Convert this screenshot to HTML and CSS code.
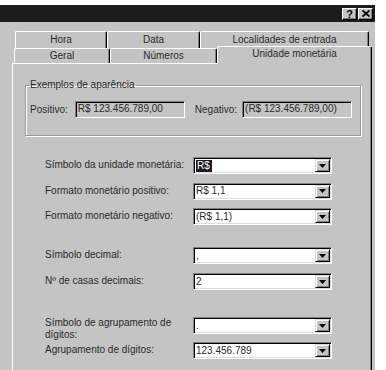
FILE: index.html
```html
<!DOCTYPE html>
<html lang="pt">

<head>
    <meta charset="UTF-8">
    <meta name="viewport" content="width=device-width, initial-scale=1.0">
    <link rel="stylesheet" href="styles.css">
    <title>Configurações regionais</title>
</head>

<body>

    <div class="dialog">
        <div class="titlebar">
            <span class="caption-btn help">?</span>
            <span class="caption-btn close">
                <svg width="8" height="7" viewBox="0 0 8 7">
                    <path d="M0.5 0.5 L7.5 6.5 M7.5 0.5 L0.5 6.5" stroke="#000" stroke-width="1.8" />
                </svg>
            </span>
        </div>

        <div class="tabs">
            <div class="tab-row row-back">
                <div class="tab tab-hora">Hora</div>
                <div class="tab tab-data">Data</div>
                <div class="tab tab-locale">Localidades de entrada</div>
            </div>
            <div class="tab-row row-front">
                <div class="tab tab-geral">Geral</div>
                <div class="tab tab-numeros">Números</div>
                <div class="tab tab-moeda selected">Unidade monetária</div>
            </div>
        </div>

        <div class="panel">
            <fieldset class="examples">
                <legend>Exemplos de aparência</legend>
                <div class="sample-row">
                    <span class="sample-label">Positivo:</span>
                    <span class="sample-box">R$ 123.456.789,00</span>
                    <span class="sample-label negative">Negativo:</span>
                    <span class="sample-box">(R$ 123.456.789,00)</span>
                </div>
            </fieldset>

            <div class="field-group group-currency">
                <div class="field">
                    <label>Símbolo da unidade monetária:</label>
                    <div class="combo">
                        <span class="combo-value"><span class="highlight">R$</span></span>
                        <span class="combo-btn"><svg width="7" height="4" viewBox="0 0 7 4"><polygon points="0,0 7,0 3.5,4" fill="#000" /></svg></span>
                    </div>
                </div>
                <div class="field">
                    <label>Formato monetário positivo:</label>
                    <div class="combo">
                        <span class="combo-value">R$ 1,1</span>
                        <span class="combo-btn"><svg width="7" height="4" viewBox="0 0 7 4"><polygon points="0,0 7,0 3.5,4" fill="#000" /></svg></span>
                    </div>
                </div>
                <div class="field">
                    <label>Formato monetário negativo:</label>
                    <div class="combo">
                        <span class="combo-value">(R$ 1,1)</span>
                        <span class="combo-btn"><svg width="7" height="4" viewBox="0 0 7 4"><polygon points="0,0 7,0 3.5,4" fill="#000" /></svg></span>
                    </div>
                </div>
            </div>

            <div class="field-group group-decimal">
                <div class="field">
                    <label>Símbolo decimal:</label>
                    <div class="combo">
                        <span class="combo-value">,</span>
                        <span class="combo-btn"><svg width="7" height="4" viewBox="0 0 7 4"><polygon points="0,0 7,0 3.5,4" fill="#000" /></svg></span>
                    </div>
                </div>
                <div class="field">
                    <label>Nº de casas decimais:</label>
                    <div class="combo">
                        <span class="combo-value">2</span>
                        <span class="combo-btn"><svg width="7" height="4" viewBox="0 0 7 4"><polygon points="0,0 7,0 3.5,4" fill="#000" /></svg></span>
                    </div>
                </div>
            </div>

            <div class="field-group group-digits">
                <div class="field">
                    <label class="wrap">Símbolo de agrupamento de dígitos:</label>
                    <div class="combo">
                        <span class="combo-value">.</span>
                        <span class="combo-btn"><svg width="7" height="4" viewBox="0 0 7 4"><polygon points="0,0 7,0 3.5,4" fill="#000" /></svg></span>
                    </div>
                </div>
                <div class="field">
                    <label>Agrupamento de dígitos:</label>
                    <div class="combo">
                        <span class="combo-value">123.456.789</span>
                        <span class="combo-btn"><svg width="7" height="4" viewBox="0 0 7 4"><polygon points="0,0 7,0 3.5,4" fill="#000" /></svg></span>
                    </div>
                </div>
            </div>
        </div>
    </div>

</body>

</html>
```

FILE: styles.css
```css
html,
body {
    overflow: hidden;
}

body {
    margin: 0;
    background-color: #fff;
    font-family: "Liberation Sans", Arial, sans-serif;
    font-size: 10px;
    line-height: 12px;
    color: #2a2a2a;
}

.dialog {
    width: 375px;
    margin-top: 5px;
    background-color: #c4c4c4;
}

/* title bar */
.titlebar {
    height: 17px;
    background-color: #1c1c1c;
    display: flex;
    align-items: center;
    justify-content: flex-end;
    gap: 1px;
    padding-right: 2px;
}

.caption-btn {
    box-sizing: border-box;
    width: 15px;
    height: 12px;
    background-color: #c4c4c4;
    border-top: 1px solid #fff;
    border-left: 1px solid #fff;
    border-right: 1px solid #000;
    border-bottom: 1px solid #000;
    box-shadow: inset -1px -1px 0 #808080;
    display: flex;
    align-items: center;
    justify-content: center;
    font-weight: bold;
    font-size: 11px;
    color: #000;
}

/* tabs */
.tabs {
    padding-top: 9px;
}

.tab-row {
    display: flex;
}

.row-back {
    margin-left: 15px;
    height: 17px;
}

.row-front {
    margin-left: 14px;
    height: 15px;
    align-items: flex-end;
}

.tab {
    box-sizing: border-box;
    height: 100%;
    border-top: 1px solid #fff;
    border-left: 1px solid #fff;
    border-right: 1px solid #000;
    border-radius: 2px 2px 0 0;
    box-shadow: inset -1px 0 0 #808080;
    display: flex;
    align-items: center;
    justify-content: center;
    background-color: #c4c4c4;
}

.tab-hora { width: 92px; }
.tab-data { width: 93px; }
.tab-locale { width: 169px; }
.tab-geral { width: 96px; }
.tab-numeros { width: 107px; }
.tab-moeda { width: 155px; }

.tab.selected {
    position: relative;
    height: 18px;
    margin-bottom: -1px;
    padding-bottom: 3px;
}

/* panel */
.panel {
    box-sizing: border-box;
    width: 360px;
    height: 307px;
    margin-left: 12px;
    border-top: 1px solid #fff;
    border-left: 1px solid #fff;
    border-right: 1px solid #000;
    box-shadow: inset -1px 0 0 #808080;
}

.examples {
    box-sizing: border-box;
    width: 336px;
    margin: 15px 0 0 12px;
    padding: 10px 3px 17px 3px;
    border: 1px solid #9a9a9a;
    box-shadow: 1px 1px 0 #fff, inset 1px 1px 0 #fff;
}

.examples legend {
    padding: 0 1px;
}

.sample-row {
    display: flex;
    align-items: center;
    margin-left: 1px;
}

.sample-label {
    margin-right: 7px;
}

.sample-label.negative {
    margin-left: 10px;
    margin-right: 5px;
}

.sample-box {
    box-sizing: border-box;
    width: 110px;
    height: 17px;
    padding: 1px 2px;
    border-top: 1px solid #808080;
    border-left: 1px solid #808080;
    border-right: 1px solid #fff;
    border-bottom: 1px solid #fff;
    box-shadow: inset 1px 1px 0 #000;
    white-space: nowrap;
}

/* combo fields */
.field-group {
    display: flex;
    flex-direction: column;
    gap: 8.5px;
    margin-left: 32px;
}

.group-currency { margin-top: 21px; }
.group-decimal { margin-top: 22px; gap: 9px; }
.group-digits { margin-top: 27px; gap: 1px; }

.field {
    display: flex;
    align-items: flex-start;
}

.field label {
    width: 148px;
    padding-top: 2px;
}

.field label.wrap {
    padding-top: 0;
}

.combo {
    box-sizing: border-box;
    width: 139px;
    height: 17px;
    display: flex;
    align-items: stretch;
    background-color: #fff;
    border-top: 1px solid #808080;
    border-left: 1px solid #808080;
    border-right: 1px solid #fff;
    border-bottom: 1px solid #fff;
    box-shadow: inset 1px 1px 0 #000, inset -1px -1px 0 #dcdcdc;
    padding: 1px;
}

.combo-value {
    flex: 1;
    padding-left: 1px;
    display: flex;
    align-items: center;
    white-space: nowrap;
}

.highlight {
    background-color: #1c1c1c;
    color: #fff;
    padding: 0 2px 0 1px;
    line-height: 12px;
}

.combo-btn {
    box-sizing: border-box;
    width: 15px;
    background-color: #c4c4c4;
    border-top: 1px solid #dcdcdc;
    border-left: 1px solid #dcdcdc;
    border-right: 1px solid #000;
    border-bottom: 1px solid #000;
    box-shadow: inset 1px 1px 0 #fff, inset -1px -1px 0 #808080;
    display: flex;
    align-items: center;
    justify-content: center;
}
```
